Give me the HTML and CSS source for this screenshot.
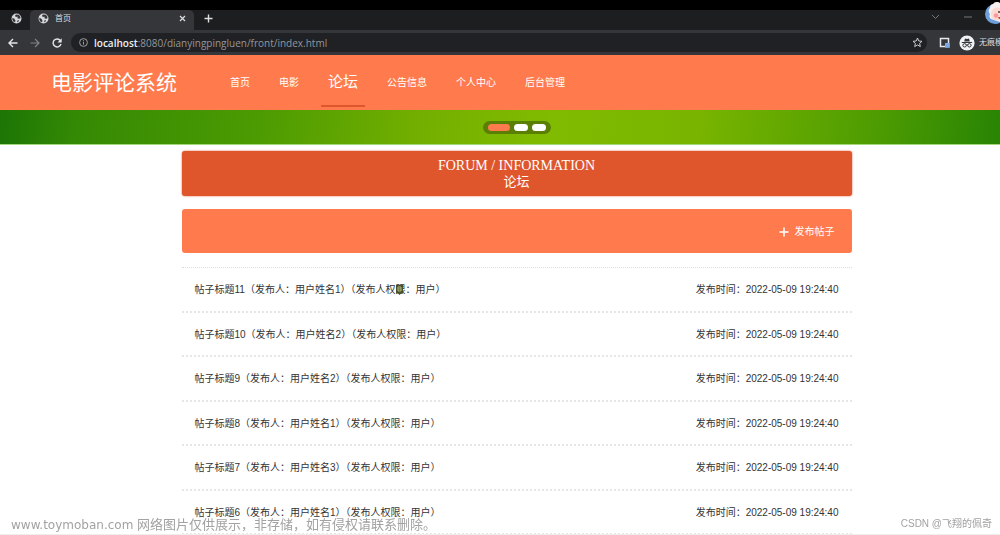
FILE: index.html
```html
<!DOCTYPE html>
<html lang="zh-CN">
<head>
<meta charset="utf-8">
<title>首页</title>
<link rel="stylesheet" href="styles.css">
</head>
<body>
<svg class="defs" width="0" height="0" aria-hidden="true">
  <symbol id="globe" viewBox="0 0 12 12">
    <circle cx="6" cy="6" r="5.4" fill="#d5d7d9"/>
    <path d="M1.5 5.2 3.6 6.3 4.8 8 4.5 10.2 2.5 9.3 1.4 7zM5.4 1.6 4.2 3.4 5.6 4.4 7.2 3.9 7 5.6 8.6 6.4 10.4 5.8 10 3.6 8.4 2zM7 8.2 8.8 7.6 8 9.6 6.6 10z" fill="#35363a"/>
  </symbol>
</svg>

<header class="browser">
  <div class="tabs">
    <div class="tab tab-pinned"><svg class="ico"><use href="#globe"/></svg></div>
    <div class="tab tab-active">
      <svg class="ico"><use href="#globe"/></svg>
      <span class="tab-title">首页</span>
      <button class="plain" aria-label="关闭标签页"><svg width="7" height="7" viewBox="0 0 7 7"><path d="M1 1l5 5M6 1L1 6" stroke="#dcdee0" stroke-width="1.2"/></svg></button>
    </div>
    <button class="plain new-tab" aria-label="新标签页"><svg width="9" height="9" viewBox="0 0 9 9"><path d="M4.5 .5v8M.5 4.5h8" stroke="#dcdee0" stroke-width="1.4"/></svg></button>
    <div class="window-tools">
      <button class="plain" aria-label="搜索标签页"><svg width="9" height="6" viewBox="0 0 9 6"><path d="M1 1l3.5 3.5L8 1" fill="none" stroke="#75777a"/></svg></button>
      <button class="plain" aria-label="最小化"><svg width="8" height="2" viewBox="0 0 8 2"><path d="M0 1h8" stroke="#75777a"/></svg></button>
    </div>
  </div>
  <div class="toolbar">
    <button class="plain" aria-label="后退"><svg width="10" height="10" viewBox="0 0 10 10"><path d="M9.5 5H1M5 1L1 5l4 4" fill="none" stroke="#e3e5e7" stroke-width="1.4"/></svg></button>
    <button class="plain" aria-label="前进"><svg width="10" height="10" viewBox="0 0 10 10"><path d="M.5 5H9M5 1l4 4-4 4" fill="none" stroke="#808387" stroke-width="1.2"/></svg></button>
    <button class="plain" aria-label="刷新"><svg width="10" height="10" viewBox="0 0 10 10"><path d="M8.4 2.6A4 4 0 1 0 9 6" fill="none" stroke="#e3e5e7" stroke-width="1.4"/><path d="M9.7 .3v4.2H5.5z" fill="#e3e5e7"/></svg></button>
    <div class="address">
      <svg width="9" height="9" viewBox="0 0 9 9"><circle cx="4.500" cy="4.500" r="3.900" fill="none" stroke="#9a9da1"/><path d="M4.500 4v2.600M4.500 2.200v1" stroke="#9a9da1"/></svg>
      <span class="url"><b>localhost</b>:8080/dianyingpingluen/front/index.html</span>
      <button class="plain" aria-label="收藏"><svg width="11" height="11" viewBox="0 0 11 11"><path d="M5.500 1l1.300 3 3.200.3-2.400 2.100.7 3.200-2.800-1.700-2.800 1.700.7-3.200L1 4.300 4.200 4z" fill="none" stroke="#c9cbce"/></svg></button>
    </div>
    <button class="plain" aria-label="侧边栏"><svg width="11" height="11" viewBox="0 0 11 11"><path d="M1.500 1.500h8v8h-8z" fill="#35363a" stroke="#e6e8ef" stroke-width="1.500"/><path d="M6 6h4.800v4.800H6z" fill="#7fa8e0"/></svg></button>
    <button class="plain profile"><svg width="16" height="16" viewBox="0 0 16 16"><circle cx="8" cy="8" r="7.600" fill="#f1f3f4"/><path d="M5.200 6.500 6 3.500l2 .4 2-.4.800 3z" fill="#35363a"/><path d="M2.800 7.500h10.400" stroke="#35363a"/><circle cx="5.600" cy="10.300" r="1.700" fill="none" stroke="#35363a"/><circle cx="10.400" cy="10.300" r="1.700" fill="none" stroke="#35363a"/><path d="M7.200 10h1.600" stroke="#35363a"/></svg><span>无痕模</span></button>
  </div>
  <svg class="mascot" width="16" height="24" viewBox="0 0 16 24" aria-hidden="true">
    <circle cx="11" cy="13" r="10" fill="#6c9fdb"/>
    <path d="M7 18a4 4 0 0 1-1-5 4 4 0 0 1 0-6 4 4 0 0 1 3-4 4 4 0 0 1 4-2 4 4 0 0 1 3 1v19z" fill="#f6eff0"/>
    <path d="M16 7a6.500 6.500 0 1 0 0 12z" fill="#fbd9d2"/>
    <circle cx="12" cy="14.500" r="2.200" fill="#f19a9a"/>
    <circle cx="15" cy="11" r="1" fill="#4c3434"/>
    <path d="M14 16h2v2h-1z" fill="#d33f46"/>
  </svg>
</header>

<div class="site-header">
  <h1 class="brand">电影评论系统</h1>
  <nav class="menu">
    <a href="#">首页</a>
    <a href="#">电影</a>
    <a href="#" class="current">论坛</a>
    <a href="#">公告信息</a>
    <a href="#">个人中心</a>
    <a href="#">后台管理</a>
  </nav>
</div>

<section class="banner">
  <div class="dots">
    <button class="dot on" aria-label="第1张"></button>
    <button class="dot" aria-label="第2张"></button>
    <button class="dot" aria-label="第3张"></button>
  </div>
</section>

<main class="page">
  <div class="content">
    <h2 class="heading"><span>FORUM / INFORMATION</span><span class="heading-cn">论坛</span></h2>
    <div class="actions">
      <button class="plain post"><svg width="10" height="10" viewBox="0 0 10 10"><path d="M5 .5v9M.5 5h9" stroke="#fff" stroke-width="1.500"/></svg>发布帖子</button>
    </div>
    <div class="posts">
      <a class="row" href="#"><span>帖子标题11（发布人：用户姓名1）（发布人权<span class="hover-char">限<svg class="pointer" width="9" height="11" viewBox="0 0 9 11" aria-hidden="true"><path d="M1 1h7v8.500H6L4.500 11 3 9.500H1z" fill="#4b5229"/><path d="M3 3h3v4H3zM3 5h3" fill="none" stroke="#aeb47c"/></svg></span>：用户）</span><time>发布时间：2022-05-09 19:24:40</time></a>
      <a class="row" href="#"><span>帖子标题10（发布人：用户姓名2）（发布人权限：用户）</span><time>发布时间：2022-05-09 19:24:40</time></a>
      <a class="row" href="#"><span>帖子标题9（发布人：用户姓名2）（发布人权限：用户）</span><time>发布时间：2022-05-09 19:24:40</time></a>
      <a class="row" href="#"><span>帖子标题8（发布人：用户姓名1）（发布人权限：用户）</span><time>发布时间：2022-05-09 19:24:40</time></a>
      <a class="row" href="#"><span>帖子标题7（发布人：用户姓名3）（发布人权限：用户）</span><time>发布时间：2022-05-09 19:24:40</time></a>
      <a class="row" href="#"><span>帖子标题6（发布人：用户姓名1）（发布人权限：用户）</span><time>发布时间：2022-05-09 19:24:40</time></a>
    </div>
  </div>
</main>

<footer class="marks">
  <span class="mark-site"><span class="mark-domain">www.toymoban.com</span> 网络图片仅供展示，非存储，如有侵权请联系删除。</span>
  <span class="mark-author">CSDN @飞翔的佩奇</span>
</footer>
</body>
</html>
```

FILE: styles.css
```css
* { box-sizing: border-box; }

body {
  margin: 0;
  background: #fff;
  color: #333;
  font: 10px/16px "Liberation Sans", "Noto Sans CJK SC", sans-serif;
  overflow: hidden;
}

a { color: inherit; text-decoration: none; }
svg { display: block; flex: none; }
.defs { position: absolute; }

.plain {
  display: flex;
  align-items: center;
  padding: 0;
  border: 0;
  background: none;
  color: inherit;
  font: inherit;
}

/* Browser frame */
.browser {
  position: relative;
  padding-top: 10px;
  background: #000;
  color: #dcdee0;
}

.tabs {
  display: flex;
  height: 20px;
  background: #1d1e20;
}

.ico { width: 11px; height: 11px; }

.tab { display: flex; align-items: center; padding-bottom: 3px; }
.tab-pinned { width: 30px; padding-left: 11px; }

.tab-active {
  width: 164px;
  gap: 6px;
  padding-left: 8px;
  padding-right: 8px;
  border-radius: 5px 5px 0 0;
  background: #35363a;
}

.tab-title { flex: 1; font-size: 8px; line-height: 10px; padding-top: 1px; }
.new-tab { margin-left: 10px; padding-bottom: 3px; }

.window-tools {
  display: flex;
  gap: 24px;
  margin-left: auto;
  padding: 0 28px 6px 0;
}

.toolbar {
  display: flex;
  align-items: center;
  gap: 12px;
  height: 25px;
  padding-left: 8px;
  background: #35363a;
  overflow: hidden;
}

.address {
  display: flex;
  flex: 1;
  align-items: center;
  gap: 6px;
  height: 19px;
  margin-left: -3px;
  padding: 0 4px 0 8px;
  border-radius: 10px;
  background: #202124;
}

.url {
  flex: 1;
  color: #94979b;
  font-family: "Open Sans", sans-serif;
  font-size: 10px;
}

.url b { color: #eceef0; font-weight: 600; }

.profile {
  flex: none;
  gap: 4px;
  width: 41px;
  margin-left: -3px;
  overflow: hidden;
  white-space: nowrap;
  font-size: 8px;
}

.mascot { position: absolute; top: 1px; right: 0; }

/* Site header */
.site-header {
  display: flex;
  align-items: stretch;
  gap: 46px;
  height: 55px;
  padding-left: 51px;
  background: #ff7b4d;
  color: #fff;
}

.brand {
  margin: 0;
  font-size: 21px;
  font-weight: 400;
  line-height: 55px;
}

.menu { display: flex; gap: 15px; line-height: 56px; }
.menu a { padding: 0 7px; margin-bottom: 3px; }

.menu .current {
  border-bottom: 2px solid #df562d;
  font-size: 15px;
  line-height: 53px;
}

.banner {
  display: flex;
  justify-content: center;
  align-items: center;
  height: 35px;
  padding-left: 33px;
  border-bottom: 1px solid #a6d67b;
  background: linear-gradient(97deg, #1c7505 0%, #358a04 8%, #4c9b02 26%, #73af00 42%, #81bb00 55%, #78b400 70%, #4c9b02 88%, #288404 100%);
}

.dots {
  display: flex;
  gap: 4px;
  padding: 3px 5px;
  border-radius: 7px;
  background: #5b7f05;
}

.dot {
  width: 14px;
  height: 7px;
  padding: 0;
  border: 0;
  border-radius: 4px;
  background: #fff;
}

.dot.on { width: 22px; background: #ff7b4d; }

/* Forum */
.page { padding: 6px 0 0 33px; }
.content { width: 670px; max-width: 100%; margin: 0 auto; }

.heading {
  display: flex;
  flex-direction: column;
  align-items: center;
  margin: 0 0 13px;
  padding: 7px 0 6px;
  border-radius: 3px;
  background: #df562d;
  box-shadow: 0 0 2px #df562d;
  color: #fff;
  font: 14px/16px "Liberation Serif", "Noto Sans CJK SC", serif;
}

.heading-cn { font-size: 13px; }

.actions {
  display: flex;
  justify-content: flex-end;
  padding: 15px 17px 13px;
  border-radius: 3px;
  background: #ff7b4d;
  color: #fff;
}

.post { gap: 6px; }

.posts {
  display: grid;
  grid-auto-rows: 1fr;
  min-height: 268px;
  margin-top: 14px;
  border-top: 1px dotted #ddd;
}

.row {
  display: flex;
  justify-content: space-between;
  align-items: center;
  padding: 2px 13px 0;
  border-bottom: 2px dotted #e6e6e6;
}

.hover-char { position: relative; }
.pointer { position: absolute; top: 0; left: 0; }

.marks {
  position: fixed;
  right: 0;
  bottom: 0;
  left: 0;
  display: flex;
  justify-content: space-between;
  align-items: center;
  padding: 2px 8px 0 11px;
  border-bottom: 1px solid #eee;
  color: #a2a2a2;
}

.mark-site { font-size: 13px; }
.mark-domain { font-family: "DejaVu Sans", sans-serif; font-size: 12px; }
.mark-author { padding-bottom: 2px; font-size: 10px; }
```
